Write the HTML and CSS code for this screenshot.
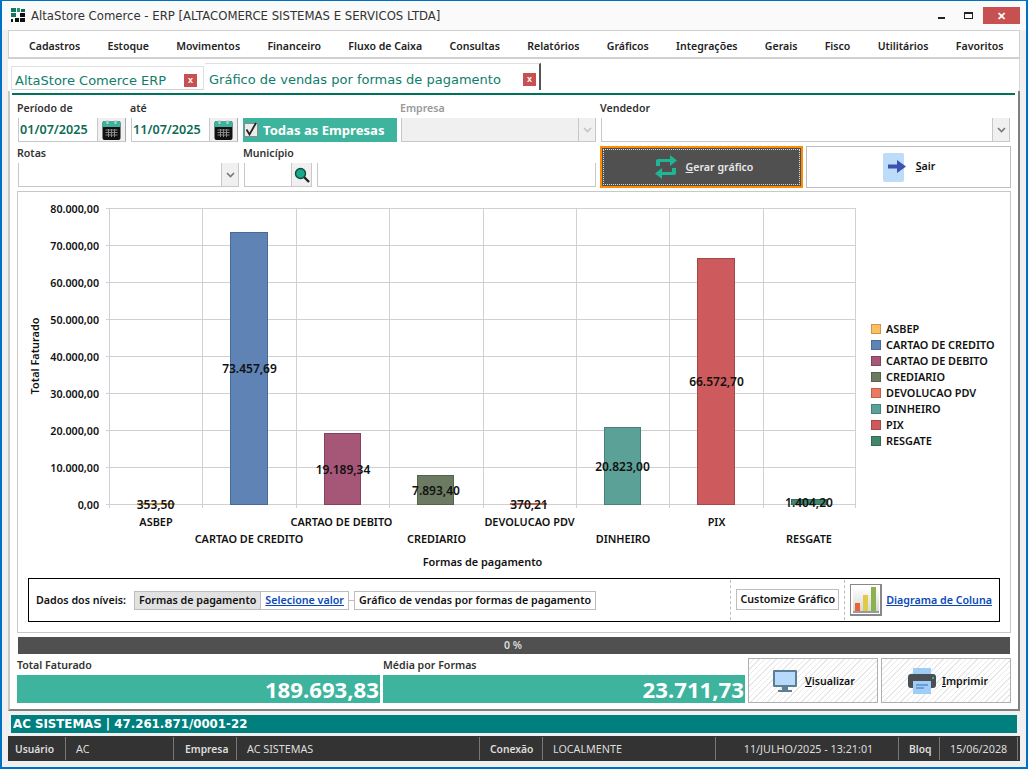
FILE: index.html
```html
<!DOCTYPE html>
<html lang="pt-BR">
<head>
<meta charset="utf-8">
<title>AltaStore Comerce - ERP</title>
<link rel="stylesheet" href="styles.css">
</head>
<body>
<div class="window">
  <header class="titlebar">
    <svg class="logo" width="14" height="15" viewBox="0 0 14 15">
      <rect x="0" y="0" width="5" height="4" fill="#14795c"/><rect x="6" y="0" width="3" height="4" fill="#1d9a78"/><rect x="10" y="1" width="4" height="3" fill="#14665a"/>
      <rect x="0" y="5" width="5" height="4" fill="#14795c"/><rect x="9" y="5" width="5" height="4" fill="#111"/>
      <rect x="0" y="11" width="2" height="3" fill="#111"/><rect x="4" y="10" width="4" height="4" fill="#111"/><rect x="9" y="10" width="5" height="4" fill="#111"/>
    </svg>
    <span class="title-text">AltaStore Comerce - ERP [ALTACOMERCE SISTEMAS E SERVICOS LTDA]</span>
    <div class="win-controls">
      <span class="win-min"></span>
      <span class="win-max"></span>
      <span class="win-close">✕</span>
    </div>
  </header>

  <nav class="menu">
    <span>Cadastros</span><span>Estoque</span><span>Movimentos</span><span>Financeiro</span><span>Fluxo de Caixa</span><span>Consultas</span><span>Relatórios</span><span>Gráficos</span><span>Integrações</span><span>Gerais</span><span>Fisco</span><span>Utilitários</span><span>Favoritos</span>
  </nav>

  <div class="tabs">
    <div class="tab tab-home"><span>AltaStore Comerce ERP</span><b class="tab-x">x</b></div>
    <div class="tab tab-active"><span>Gráfico de vendas por formas de pagamento</span><b class="tab-x">x</b></div>
  </div>

  <main class="panel">
    <div class="green-rule"></div>
    <section class="filters">
      <div class="row row-one">
        <div class="field f-date">
          <label>Período de</label>
          <div class="date"><span class="date-val">01/07/2025</span><span class="cal-btn"><svg width="19" height="20" viewBox="0 0 18 20"><rect x="0" y="1" width="18" height="19" rx="2" fill="#111"/><path d="M0 3a2 2 0 0 1 2-2h14a2 2 0 0 1 2 2v4H0z" fill="#3bb39d"/><rect x="4" y="0" width="2" height="4" fill="#ccc"/><rect x="12" y="0" width="2" height="4" fill="#ccc"/><path d="M3 10h12M3 12.500h12M3 15h12M6 9v8M9 9v8M12 9v8" stroke="#888" stroke-width="1"/></svg></span></div>
        </div>
        <div class="field f-date f-date2">
          <label>até</label>
          <div class="date"><span class="date-val">11/07/2025</span><span class="cal-btn"><svg width="19" height="20" viewBox="0 0 18 20"><rect x="0" y="1" width="18" height="19" rx="2" fill="#111"/><path d="M0 3a2 2 0 0 1 2-2h14a2 2 0 0 1 2 2v4H0z" fill="#3bb39d"/><rect x="4" y="0" width="2" height="4" fill="#ccc"/><rect x="12" y="0" width="2" height="4" fill="#ccc"/><path d="M3 10h12M3 12.500h12M3 15h12M6 9v8M9 9v8M12 9v8" stroke="#888" stroke-width="1"/></svg></span></div>
        </div>
        <div class="field f-all">
          <label>&nbsp;</label>
          <div class="all-box"><span class="check"><svg width="15" height="15" viewBox="0 0 15 15"><path d="M3.500 7.500l3 5L13 1" fill="none" stroke="#222" stroke-width="1.800"/></svg></span>Todas as Empresas</div>
        </div>
        <div class="field f-emp">
          <label class="muted">Empresa</label>
          <div class="combo combo-off"><i class="arrow"><svg width="9" height="6" viewBox="0 0 9 6"><path d="M1 1l3.500 3.500L8 1" fill="none" stroke="#c4c4c4" stroke-width="1.600"/></svg></i></div>
        </div>
        <div class="field f-vend">
          <label>Vendedor</label>
          <div class="combo"><i class="arrow"><svg width="9" height="6" viewBox="0 0 9 6"><path d="M1 1l3.500 3.500L8 1" fill="none" stroke="#777" stroke-width="1.600"/></svg></i></div>
        </div>
      </div>
      <div class="row row-two">
        <div class="field f-rotas">
          <label>Rotas</label>
          <div class="combo"><i class="arrow"><svg width="9" height="6" viewBox="0 0 9 6"><path d="M1 1l3.500 3.500L8 1" fill="none" stroke="#777" stroke-width="1.600"/></svg></i></div>
        </div>
        <div class="field f-mun">
          <label>Município</label>
          <div class="mun-line">
            <div class="mun-code"><span class="search-btn"><svg width="16" height="16" viewBox="0 0 16 16"><path d="M10 10l5 5" stroke="#222" stroke-width="2.400"/><circle cx="6.500" cy="6.500" r="5" fill="#1aa88a" stroke="#0b4c3f" stroke-width="1.400"/></svg></span></div>
            <div class="mun-name"></div>
          </div>
        </div>
        <button class="btn-gerar"><span class="dotted">
          <svg width="24" height="24" viewBox="0 0 24 24"><path d="M2 11V6a2 2 0 0 1 2-2h12V0l7 5.500-7 5.500V7H6v4z" fill="#1fb597"/><path d="M22 13v5a2 2 0 0 1-2 2H8v4l-7-5.500L8 13v4h10v-4z" fill="#1fb597"/></svg>
          <span><u>G</u>erar gráfico</span></span></button>
        <button class="btn-sair">
          <svg width="24" height="29" viewBox="0 0 24 29"><rect width="21" height="29" rx="2" fill="#bcdcfa"/><path d="M5 11.500h9V7l9 6.500-9 6.500v-4.500H5z" fill="#3c51b0"/></svg>
          <span class="sair-label"><u>S</u>air</span></button>
      </div>
    </section>

    <section class="chart-box">
      <svg class="chart" width="992" height="384" viewBox="18 192 992 384" role="img" aria-label="Gráfico de colunas">
        <g class="grid">
          <path d="M106 208.500H856M106 245.500H856M106 282.500H856M106 319.500H856M106 356.500H856M106 393.500H856M106 430.500H856M106 467.500H856M106 504.500H856"/>
          <path d="M109.500 208V508M202.500 208V508M296.500 208V508M389.500 208V508M483.500 208V508M576.500 208V508M669.500 208V508M763.500 208V508M855.500 208V508"/>
        </g>
        <g class="bars">
          <rect x="137.500" y="503.500" width="37" height="1" fill="#fdbf5f" stroke="#c9964a"/>
          <rect x="230.500" y="232.500" width="37" height="272" fill="#5f83b5" stroke="#476a96"/>
          <rect x="324.500" y="433.500" width="36" height="71" fill="#a65677" stroke="#85425e"/>
          <rect x="417.500" y="475.500" width="36" height="29" fill="#6b7a60" stroke="#55634b"/>
          <rect x="510.500" y="503.500" width="36" height="1" fill="#e97b62" stroke="#b9624e"/>
          <rect x="604.500" y="427.500" width="36" height="77" fill="#5ba198" stroke="#47827a"/>
          <rect x="697.500" y="258.500" width="37" height="246" fill="#cd5b5d" stroke="#a5484a"/>
          <rect x="791.500" y="499.500" width="35" height="5" fill="#42866b" stroke="#346b55"/>
        </g>
        <g class="axis-y">
          <text x="99" y="212.500">80.000,00</text><text x="99" y="249.500">70.000,00</text><text x="99" y="286.500">60.000,00</text><text x="99" y="323.500">50.000,00</text><text x="99" y="360.500">40.000,00</text><text x="99" y="397.500">30.000,00</text><text x="99" y="434.500">20.000,00</text><text x="99" y="471.500">10.000,00</text><text x="99" y="508.500">0,00</text>
        </g>
        <text class="y-title" transform="translate(39 356) rotate(-90)">Total Faturado</text>
        <g class="values">
          <text x="155.500" y="509">353,50</text><text x="249.500" y="373">73.457,69</text><text x="343" y="474">19.189,34</text><text x="436" y="495">7.893,40</text><text x="529" y="509">370,21</text><text x="622.500" y="471">20.823,00</text><text x="716.500" y="386">66.572,70</text><text x="809" y="507">1.404,20</text>
        </g>
        <g class="cats">
          <text x="156" y="526">ASBEP</text><text x="249" y="543">CARTAO DE CREDITO</text><text x="341.500" y="526">CARTAO DE DEBITO</text><text x="436.500" y="543">CREDIARIO</text><text x="529.500" y="526">DEVOLUCAO PDV</text><text x="623" y="543">DINHEIRO</text><text x="716.500" y="526">PIX</text><text x="809" y="543">RESGATE</text>
        </g>
        <text class="x-title" x="482.500" y="566">Formas de pagamento</text>
        <g class="legend">
          <rect x="871.500" y="324.500" width="9" height="9" fill="#fdbf5f" stroke="#c9964a"/><text x="886" y="333">ASBEP</text>
          <rect x="871.500" y="340.500" width="9" height="9" fill="#5f83b5" stroke="#476a96"/><text x="886" y="349">CARTAO DE CREDITO</text>
          <rect x="871.500" y="356.500" width="9" height="9" fill="#a65677" stroke="#85425e"/><text x="886" y="365">CARTAO DE DEBITO</text>
          <rect x="871.500" y="372.500" width="9" height="9" fill="#6b7a60" stroke="#55634b"/><text x="886" y="381">CREDIARIO</text>
          <rect x="871.500" y="388.500" width="9" height="9" fill="#e97b62" stroke="#b9624e"/><text x="886" y="397">DEVOLUCAO PDV</text>
          <rect x="871.500" y="404.500" width="9" height="9" fill="#5ba198" stroke="#47827a"/><text x="886" y="413">DINHEIRO</text>
          <rect x="871.500" y="420.500" width="9" height="9" fill="#cd5b5d" stroke="#a5484a"/><text x="886" y="429">PIX</text>
          <rect x="871.500" y="436.500" width="9" height="9" fill="#42866b" stroke="#346b55"/><text x="886" y="445">RESGATE</text>
        </g>
      </svg>
      <div class="levels">
        <span class="lv-label">Dados dos níveis:</span>
        <div class="lv-group"><span class="lv-active">Formas de pagamento</span><a class="lv-link">Selecione valor</a></div>
        <span class="lv-conn"></span>
        <span class="lv-title">Gráfico de vendas por formas de pagamento</span>
        <div class="lv-tools">
          <span class="lv-custom">Customize Gráfico</span>
        </div>
        <div class="lv-type">
          <span class="lv-icon"><svg width="26" height="26" viewBox="0 0 26 26"><defs><linearGradient id="bg" x1="0" y1="0" x2="0" y2="1"><stop offset="0" stop-color="#ffffff"/><stop offset="1" stop-color="#d4d4d4"/></linearGradient></defs><rect width="26" height="26" fill="url(#bg)"/><rect x="0" y="24" width="26" height="2" fill="#9a9a9a"/><rect x="2" y="16" width="5" height="8" fill="#e8623a"/><rect x="10" y="8" width="5" height="16" fill="#dfcb45"/><rect x="18" y="0" width="5" height="24" fill="#8ab34f"/></svg></span>
          <a class="lv-link">Diagrama de Coluna</a>
        </div>
      </div>
    </section>

    <div class="progress">0 %</div>

    <section class="totals">
      <div class="total t-a"><label>Total Faturado</label><output>189.693,83</output></div>
      <div class="total t-b"><label>Média por Formas</label><output>23.711,73</output></div>
      <button class="btn-hatch btn-vis">
        <svg width="24" height="22" viewBox="0 0 24 22"><rect x="0" y="0" width="24" height="17" rx="1" fill="#5d7f94"/><rect x="2" y="2" width="20" height="13" fill="#b5dafb"/><rect x="9" y="17" width="6" height="3" fill="#5d7f94"/><rect x="5" y="20" width="14" height="2" fill="#5d7f94"/></svg>
        <span><u>V</u>isualizar</span></button>
      <button class="btn-hatch btn-imp">
        <svg width="28" height="26" viewBox="0 0 28 26"><rect x="5" y="0" width="18" height="8" fill="#9fcdf5"/><rect x="0" y="6" width="28" height="14" rx="3" fill="#4a4f54"/><rect x="24" y="9" width="2" height="2" fill="#2fb597"/><rect x="5" y="13" width="18" height="13" fill="#9fcdf5"/><path d="M8 17h12M8 20h8" stroke="#5a8fd0" stroke-width="1.500"/></svg>
        <span><u>I</u>mprimir</span></button>
    </section>
  </main>

  <div class="company">AC SISTEMAS | 47.261.871/0001-22</div>

  <footer class="status">
    <span class="s s-user"><b>Usuário</b></span>
    <span class="s s-ac">AC</span>
    <span class="s s-emp"><b>Empresa</b></span>
    <span class="s s-acs">AC SISTEMAS</span>
    <span class="s s-con"><b>Conexão</b></span>
    <span class="s s-loc">LOCALMENTE</span>
    <span class="s s-date">11/JULHO/2025 - 13:21:01</span>
    <span class="s s-blq"><b>Bloq</b></span>
    <span class="s s-end">15/06/2028</span>
  </footer>
</div>
</body>
</html>
```
FILE: styles.css
```css
* { box-sizing: border-box; }
html, body { margin: 0; padding: 0; }
body { width: 1028px; height: 769px; overflow: hidden; font-family: "Noto Sans", "Liberation Sans", sans-serif; font-size: 11px; color: #222; background: #fff; }
.window { width: 1028px; height: 769px; border: 1px solid #0072c6; border-width: 1px 2px 2px 2px; background: #f0f0f0; display: flex; flex-direction: column; }

.titlebar { height: 29px; background: #fafafa; display: flex; align-items: center; padding-left: 9px; flex: none; }
.logo { margin-right: 6px; }
.title-text { font-family: "DejaVu Sans", sans-serif; font-size: 11.700px; color: #333; }
.win-controls { margin-left: auto; display: flex; align-items: center; margin-right: 6px; }
.win-min { width: 7px; height: 2px; background: #222; margin-top: 5px; margin-right: 19px; }
.win-max { width: 9px; height: 7px; border: 1px solid #222; border-top-width: 2px; margin-right: 10px; }
.win-close { width: 37px; height: 17px; background: #c75050; color: #fff; font-size: 11px; font-weight: 700; display: flex; align-items: center; justify-content: center; }

.menu { margin: 0 6px; height: 29px; flex: none; background: #fff; border: 1px solid #d0d0d0; border-bottom-width: 2px; display: flex; align-items: center; padding: 3px 0 0 20px; font-weight: 600; font-size: 10.550px; color: #222; gap: 27.300px; }

.tabs { height: 32px; flex: none; margin: 0 6px; background: #fff; display: flex; align-items: flex-end; padding: 0 0 1px 3px; border-right: 1px solid #d8d8d8; }
.tab { display: flex; align-items: center; justify-content: space-between; font-family: "DejaVu Sans", sans-serif; font-size: 13px; color: #0f7d6b; background: #fff; }
.tab-home { width: 193px; height: 24px; border: 1px solid #e0e0e0; border-bottom-color: #d0d0d0; padding: 4px 6px 0 3px; }
.tab-active { width: 336px; height: 27px; padding: 4px 3px 0 4px; border-top: 1px solid #e0e0e0; border-right: 2px solid #555; margin-left: 1px; }
.tab-x { width: 13px; height: 13px; background: #c75050; color: #fff; font: 700 9px/12px "Liberation Sans", sans-serif; text-align: center; flex: none; }

.panel { flex: none; height: 620px; margin: 0 6px; background: #fff; border-left: 2px solid #c8c8c8; border-right: 2px solid #808080; border-bottom: 2px solid #808080; padding: 2px 0 0 0; }
.green-rule { height: 2px; background: #00725a; margin-left: 2px; width: 1003px; }

.filters { padding: 7px 0 0 8px; height: 96px; }
.row { display: flex; }
.row-one { height: 46px; }
.row-two { height: 46px; margin-top: -1px; }
.field { display: flex; flex-direction: column; }
label { font-weight: 600; font-size: 10.600px; line-height: 12px; height: 16px; color: #333; display: block; }
.filters label { margin-left: -1px; }
label.muted { color: #999; }
.f-date { width: 113px; }
.f-date2 { width: 112px; }
.date { display: flex; width: 108px; height: 24px; border: 1px solid #c8c8c8; border-top: 0; border-right-color: #aaa; }
.f-date2 .date { width: 107px; }
.date-val { flex: 1; font-size: 12.600px; font-weight: 600; color: #0d6b55; line-height: 23px; padding-left: 1px; white-space: nowrap; }
.cal-btn { width: 28px; flex: none; background: #f0f0f0; border-left: 1px solid #c8c8c8; display: flex; align-items: center; justify-content: center; }
.f-all { width: 158px; }
.all-box { height: 24px; width: 154px; background: #3eb39d; color: #fff; font-weight: 700; font-size: 13.100px; display: flex; align-items: center; padding-left: 1px; gap: 5px; white-space: nowrap; }
.check { width: 14px; height: 14px; background: #ececec; border: 1px solid #8a8a8a; display: block; flex: none; }
.check svg { display: block; margin: -2px 0 0 -2px; }
.f-emp { width: 200px; }
.f-vend { width: 409px; }
.combo { height: 24px; background: #fff; border: 1px solid #c8c8c8; border-top: 0; display: flex; justify-content: flex-end; }
.combo-off { background: #f0f0f0; width: 195px; }
.f-rotas .combo { width: 221px; }
.arrow { width: 17px; background: #f0f0f0; border-left: 1px solid #c8c8c8; display: flex; align-items: center; justify-content: center; }
.f-rotas { width: 226px; }
.f-mun { width: 356px; }
.mun-line { display: flex; height: 24px; gap: 5px; width: 352px; }
.mun-code { width: 68px; flex: none; border: 1px solid #c8c8c8; border-top: 0; display: flex; justify-content: flex-end; }
.search-btn { width: 20px; background: #f0f0f0; border-left: 1px solid #c8c8c8; display: flex; align-items: center; justify-content: center; }
.mun-name { flex: 1; border: 1px solid #c8c8c8; border-top: 0; }
.btn-gerar { width: 203px; height: 42px; margin-top: -1px; padding: 1px; background: #505050; border: 2px solid #ff8c00; color: #e8e8e8; font: 600 10.600px "Noto Sans", sans-serif; }
.dotted { display: flex; align-items: center; justify-content: center; gap: 8px; height: 100%; border: 1px dotted #ddd; padding-left: 4px; }
.btn-sair { width: 205px; height: 42px; margin: -1px 0 0 3px; background: #fff; border: 1px solid #bdbdbd; display: flex; align-items: center; justify-content: center; gap: 9px; font: 600 10.600px "Noto Sans", sans-serif; color: #111; padding: 0 0 0 1px; }
.sair-label { margin-bottom: 2px; }

.chart-box { width: 994px; height: 442px; margin-left: 7px; border: 1px solid #c8c8c8; background: #fff; }
.chart { display: block; }
.chart text { font-family: "Noto Sans", "Liberation Sans", sans-serif; font-size: 10.900px; font-weight: 600; fill: #111; }
.chart .axis-y text { font-size: 10.700px; text-anchor: end; }
.grid path { stroke: #d0d0d0; stroke-width: 1; fill: none; }
.chart .values text { font-size: 12px; text-anchor: middle; }
.cats text, .x-title { text-anchor: middle; }
.y-title { text-anchor: middle; }

.levels { width: 972px; height: 44px; margin: 2px 0 0 10px; border: 1px solid #000; display: flex; align-items: center; padding-left: 7px; background: #fff; font-weight: 600; font-size: 10.700px; color: #111; white-space: nowrap; }
.lv-label { margin-right: 8px; }
.lv-group { display: flex; height: 19px; border: 1px solid #bdbdbd; line-height: 17px; }
.lv-active { background: #e2e2e2; padding: 0 4px; border-right: 1px solid #bdbdbd; }
.lv-link { color: #0b49b8; text-decoration: underline; padding: 0 4px; }
.lv-conn { width: 5px; height: 1px; background: #bdbdbd; }
.lv-title { height: 19px; border: 1px solid #bdbdbd; line-height: 17px; padding: 0 4px; }
.lv-tools { margin-left: auto; height: 40px; border-left: 1px dashed #bdbdbd; display: flex; align-items: center; padding: 0 5px; }
.lv-custom { height: 21px; border: 1px solid #bdbdbd; line-height: 18px; padding: 0 3px; margin-top: -2px; }
.lv-type { height: 40px; border-left: 1px dashed #bdbdbd; display: flex; align-items: center; padding-left: 5px; margin-right: 7px; }
.lv-type .lv-link { padding: 0 0 0 4px; }
.lv-icon { width: 32px; height: 32px; border: 1px solid #888; border-right-width: 2px; border-bottom-width: 2px; padding: 2px; background: #fff; display: block; }
.lv-icon svg { display: block; }

.progress { width: 992px; height: 17px; margin: 4px 0 0 8px; background: #505050; color: #ddd; font-weight: 600; font-size: 10.500px; line-height: 17px; text-align: center; padding-right: 2px; }

.totals { display: flex; padding: 4px 0 0 7px; }
.total { display: flex; flex-direction: column; }
.total label { height: 17px; line-height: 14px; }
.total output { display: block; height: 28px; background: #3eb39d; color: #fff; font-weight: 700; font-size: 22.200px; line-height: 30px; text-align: right; white-space: nowrap; padding-right: 1px; }
.t-a { width: 366px; }
.t-a output { width: 363px; }
.t-b { width: 365px; }
.t-b output { width: 362px; }
.btn-hatch { width: 130px; height: 45px; background: repeating-linear-gradient(135deg, #fff 0 3px, #e8e8e8 3px 4px); border: 1px solid #b0b0b0; display: flex; align-items: center; justify-content: center; font: 600 10.600px "Noto Sans", sans-serif; color: #111; }
.btn-vis { gap: 8px; padding: 0 0 0 2px; }
.btn-imp { gap: 6px; margin-left: 3px; padding: 0 0 0 4px; }

.company { flex: none; height: 18px; margin: 4px 9px 0 9px; background: #007f7f; color: #fff; font-family: "DejaVu Sans", sans-serif; font-weight: 700; font-size: 11.800px; line-height: 18px; padding-left: 2px; white-space: nowrap; }

.status { flex: none; height: 25px; margin: 3px 6px 0 6px; background: #333; color: #ddd; font-size: 10.750px; display: flex; align-items: center; }
.s { height: 23px; display: flex; align-items: center; border-right: 1px solid #777; padding-left: 7px; white-space: nowrap; }
.s b { font-weight: 600; font-size: 10.300px; }
.s-user { width: 58px; padding-left: 7px; }
.s-ac { width: 108px; padding-left: 10px; }
.s-emp { width: 63px; padding-left: 11px; }
.s-acs { width: 243px; padding-left: 10px; }
.s-con { width: 63px; padding-left: 10px; }
.s-loc { width: 173px; padding-left: 10px; }
.s-date { width: 183px; justify-content: center; padding: 0 0 0 3px; }
.s-blq { width: 41px; padding-left: 10px; }
.s-end { width: 78px; padding-left: 10px; }
```
